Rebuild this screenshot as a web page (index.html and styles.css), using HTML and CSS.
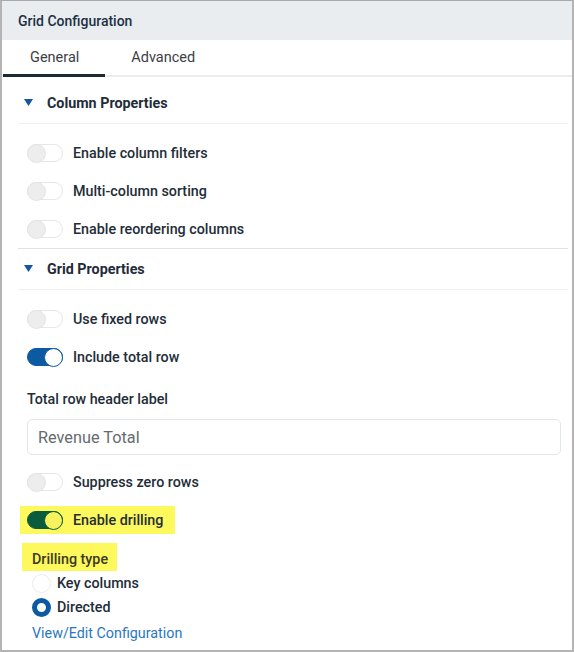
FILE: index.html
```html
<!DOCTYPE html>
<html>
<head>
<meta charset="utf-8">
<link rel="stylesheet" href="styles.css">
</head>
<body>
<div class="panel">
  <div class="header">Grid Configuration</div>
  <div class="tabs">
    <div class="tab active">General</div>
    <div class="tab">Advanced</div>
  </div>
  <div class="content">
    <div class="section first">
      <div class="section-head">
        <svg class="caret" width="9" height="7" viewBox="0 0 9 7"><path d="M0 0 H9 L4.5 7 Z" fill="#17569a"/></svg>
        <span>Column Properties</span>
      </div>
    </div>
    <div class="rows divider">
      <div class="row"><span class="toggle"><span class="knob"></span></span><span class="label">Enable column filters</span></div>
      <div class="row"><span class="toggle"><span class="knob"></span></span><span class="label">Multi-column sorting</span></div>
      <div class="row"><span class="toggle"><span class="knob"></span></span><span class="label">Enable reordering columns</span></div>
    </div>
    <div class="section">
      <div class="section-head">
        <svg class="caret" width="9" height="7" viewBox="0 0 9 7"><path d="M0 0 H9 L4.5 7 Z" fill="#17569a"/></svg>
        <span>Grid Properties</span>
      </div>
    </div>
    <div class="rows grid-rows">
      <div class="row"><span class="toggle"><span class="knob"></span></span><span class="label">Use fixed rows</span></div>
      <div class="row"><span class="toggle on"><span class="knob"></span></span><span class="label">Include total row</span></div>
      <div class="field-label">Total row header label</div>
      <div class="input">Revenue Total</div>
      <div class="row"><span class="toggle"><span class="knob"></span></span><span class="label">Suppress zero rows</span></div>
      <div class="row hl-row">
        <span class="hl hl-toggle"><span class="toggle green"><span class="knob"></span></span><span class="label">Enable drilling</span></span>
      </div>
      <div class="hl-line"><span class="hl hl-label">Drilling type</span></div>
      <div class="radio-row"><span class="radio"></span><span class="label">Key columns</span></div>
      <div class="radio-row"><span class="radio checked"></span><span class="label">Directed</span></div>
      <div class="link">View/Edit Configuration</div>
    </div>
  </div>
</div>
</body>
</html>
```

FILE: styles.css
```css
* { box-sizing: border-box; }
html, body { margin: 0; padding: 0; background: #fff; }
body { font-family: Roboto, "Noto Sans", Arial, sans-serif; }

.panel {
  width: 574px;
  height: 652px;
  border: 1px solid #a9a9a9;
  border-left: 2px solid #b4b4b4;
  border-right: 2px solid #b4b4b4;
  border-bottom: 2px solid #b4b4b4;
  overflow: hidden;
  background: #fff;
}

.header {
  height: 39px;
  background: #e9edf0;
  display: flex;
  align-items: center;
  padding-left: 16px;
  font-size: 14px;
  font-weight: 500;
  color: #1d3044;
}

.tabs {
  display: flex;
  border-bottom: 2px solid #ececec;
  padding-left: 1px;
}
.tab {
  height: 35px;
  padding: 0 26px 0 26px;
  display: flex;
  align-items: center;
  font-size: 14.5px;
  color: #3b4045;
}
.tab.active {
  height: 37px;
  padding-top: 0;
  border-bottom: 3px solid #1d2a36;
  margin-bottom: -2px;
  padding-left: 27px;
  padding-right: 26px;
}

.content {
  padding: 0 4px 0 16px;
}

.section-head {
  display: flex;
  align-items: center;
  height: 41px;
  padding-top: 0;
  border-bottom: 1px solid #efefef;
  font-size: 14.3px;
  font-weight: 700;
  color: #1f2c39;
}
.section.first .section-head { height: 47px; padding-top: 5px; }
.caret { margin-left: 6px; margin-right: 14px; margin-top: -1px; }

.rows { padding-top: 10px; }
.rows.divider { border-bottom: 1px solid #e2e2e2; }
.grid-rows { padding-top: 10px; }

.row {
  height: 38px;
  display: flex;
  align-items: center;
  padding-left: 9px;
}

.label {
  font-size: 14.3px;
  font-weight: 500;
  color: #232d38;
}

.toggle {
  position: relative;
  width: 36px;
  height: 18px;
  border: 1px solid #e6e6e6;
  border-radius: 9px;
  background: #fff;
  margin-right: 10px;
  flex: none;
}
.toggle .knob {
  position: absolute;
  left: -1px;
  top: -1px;
  width: 19px;
  height: 19px;
  border-radius: 50%;
  background: #ededed;
  border: 1px solid #e4e4e4;
}
.toggle.on {
  background: #0b5aa2;
  border-color: #0b5aa2;
}
.toggle.on .knob {
  left: auto;
  right: -1px;
  background: #fff;
  border: 1.5px solid #0b5aa2;
}
.toggle.green {
  background: #0b5b3d;
  border-color: #0b5b3d;
}
.toggle.green .knob {
  left: auto;
  right: -1px;
  background: #f8f25c;
  border: 1.5px solid #0b5b3d;
}

.field-label {
  margin-top: 13px;
  height: 20px;
  line-height: 20px;
  padding-left: 9px;
  font-size: 14.3px;
  font-weight: 500;
  color: #232d38;
}
.input {
  margin: 10px 0 8px 9px;
  width: 534px;
  height: 36px;
  border: 1.5px solid #e2e7ec;
  border-radius: 5px;
  display: flex;
  align-items: center;
  padding-left: 10px;
  font-size: 16.3px;
  color: #666b70;
}

.hl-row { padding-left: 2px; }
.hl {
  background: #fdf85c;
  display: inline-flex;
  align-items: center;
  height: 28px;
}
.hl-toggle { padding: 0 12px 0 7px; }
.hl-line {
  margin-top: 4px;
  padding-left: 4px;
  height: 28px;
}
.hl-label {
  padding: 0 9px 0 10px;
  font-size: 14.3px;
  font-weight: 500;
  color: #3a3a26;
  padding-top: 3px;
}

.radio-row {
  height: 24px;
  display: flex;
  align-items: center;
  padding-left: 14px;
}
.radio {
  width: 19px;
  height: 19px;
  border-radius: 50%;
  border: 1px solid #ececec;
  background: #fff;
  margin-right: 6px;
  flex: none;
}
.radio.checked {
  border: 5px solid #0b5aa2;
}

.link {
  margin-top: 4px;
  padding-left: 14px;
  height: 20px;
  line-height: 20px;
  font-size: 14.3px;
  color: #2a77bf;
}
```
